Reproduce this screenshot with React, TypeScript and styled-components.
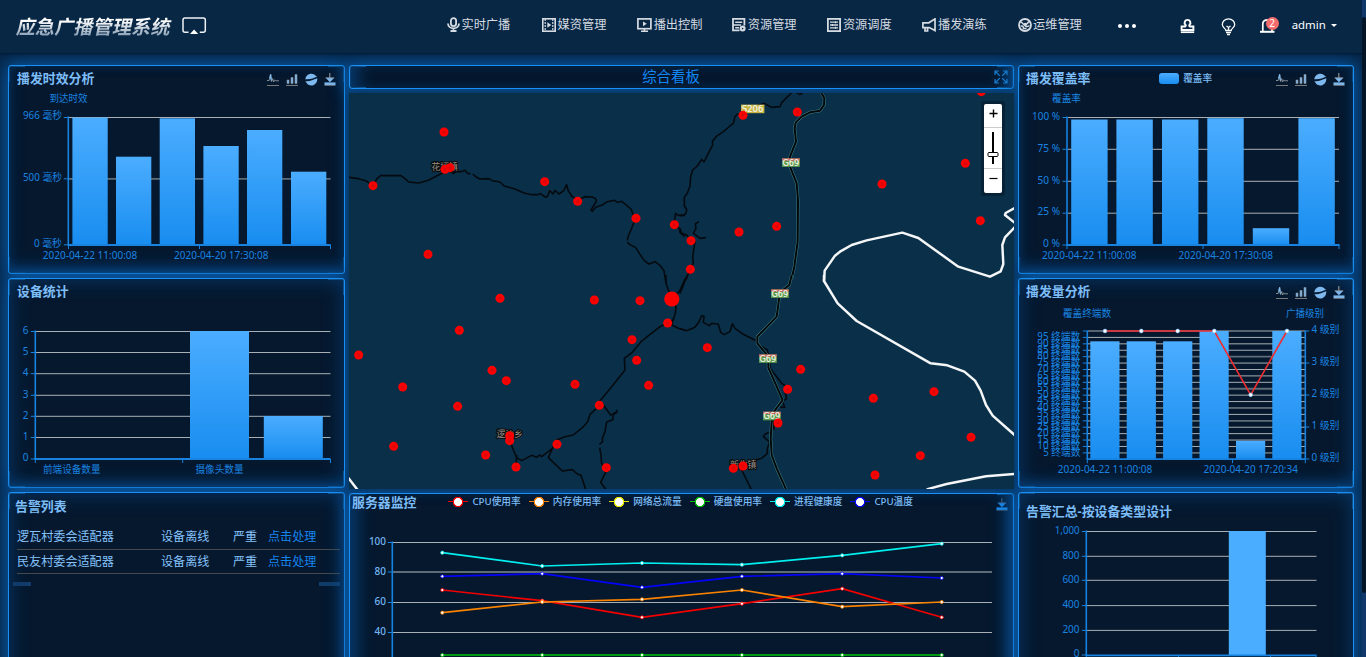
import React from 'react';
import styled, { createGlobalStyle } from 'styled-components';

const FONT = '"Noto Sans", "Noto Sans CJK SC", sans-serif';

const GlobalStyle = createGlobalStyle`
  * { box-sizing: border-box; }
  body {
    margin: 0;
    background: #052444;
    font-family: ${FONT};
    overflow: hidden;
  }
  svg { display: block; }
`;

const Page = styled.div`
  width: 1366px;
  height: 657px;
  overflow: hidden;
  display: flex;
  flex-direction: column;
  position: relative;
`;

/* ---------- header ---------- */

const Header = styled.header`
  flex: none;
  height: 53px;
  display: flex;
  align-items: flex-start;
  background: #082745;
  box-shadow: 0 1px 2px rgba(3, 22, 42, 0.8);
  position: relative;
  z-index: 2;
`;

const Logo = styled.h1`
  margin: 0;
  padding: 12px 0 0 17px;
  width: 182px;
  font-size: 19.3px;
  line-height: 29px;
  font-weight: 700;
  white-space: nowrap;
  span {
    display: inline-block;
    transform: skewX(-12deg);
    background: linear-gradient(180deg, #ffffff 30%, #8ea3b8 80%);
    background-clip: text;
    -webkit-background-clip: text;
    color: transparent;
  }
`;

const CastIcon = styled.svg`
  margin-top: 17px;
`;

const Nav = styled.nav`
  display: flex;
  margin-left: 240px;
  padding-top: 16px;
`;

const NavItem = styled.a`
  width: 95.1px;
  height: 17px;
  display: flex;
  align-items: center;
  gap: 1.5px;
  color: #d5dbe1;
  font-size: 12.2px;
  line-height: 17px;
  white-space: nowrap;
`;

const More = styled.div`
  display: flex;
  gap: 3px;
  margin: 24px 0 0 5px;
  i {
    width: 4px;
    height: 4px;
    border-radius: 50%;
    background: #fff;
  }
`;

const Tools = styled.div`
  display: flex;
  margin-left: 44px;
  padding-top: 17px;
  gap: 26px;
`;

const BellWrap = styled.div`
  position: relative;
  width: 20px;
  margin-left: -2px;
`;

const Badge = styled.span`
  position: absolute;
  left: 6px;
  top: 0;
  width: 13px;
  height: 13px;
  border-radius: 50%;
  background: #f56c6c;
  color: #fff;
  font-size: 10px;
  line-height: 12px;
  text-align: center;
`;

const User = styled.div`
  display: flex;
  align-items: center;
  gap: 5px;
  margin-left: 12px;
  padding-top: 16px;
  color: #fff;
  font-size: 11.4px;
  line-height: 18px;
  &::after {
    content: '';
    border: 3.5px solid transparent;
    border-top-color: #fff;
    border-bottom: 0;
  }
`;

/* ---------- dashboard ---------- */

const Board = styled.main`
  flex: none;
  display: grid;
  grid-template-columns: 337px 665px 336px;
  column-gap: 4px;
  padding: 12px 0 0 8px;
`;

const Column = styled.div`
  display: flex;
  flex-direction: column;
  gap: 4px;
`;

const CORNER = '#1a6da8';
const INNER = '#07396b';
const Panel = styled.section<{ $h: number; $glow?: string }>`
  flex: none;
  height: ${(p) => p.$h}px;
  border: 1px solid #1890f5;
  border-radius: 3px;
  box-shadow: 0 0 18px 2px #0a5cab, ${(p) => p.$glow || `inset 0 0 20px ${INNER}`};
  background:
    linear-gradient(${CORNER}, ${CORNER}) 0 0 / 16px 1px no-repeat,
    linear-gradient(${CORNER}, ${CORNER}) 0 0 / 1px 16px no-repeat,
    linear-gradient(${CORNER}, ${CORNER}) 100% 0 / 16px 1px no-repeat,
    linear-gradient(${CORNER}, ${CORNER}) 100% 0 / 1px 16px no-repeat,
    linear-gradient(${CORNER}, ${CORNER}) 0 100% / 16px 1px no-repeat,
    linear-gradient(${CORNER}, ${CORNER}) 0 100% / 1px 16px no-repeat,
    linear-gradient(${CORNER}, ${CORNER}) 100% 100% / 16px 1px no-repeat,
    linear-gradient(${CORNER}, ${CORNER}) 100% 100% / 1px 16px no-repeat,
    #05182e;
`;

const PanelHead = styled.div<{ $h?: number; $pl?: number }>`
  height: ${(p) => p.$h || 22}px;
  padding: 1px 8px 0 ${(p) => p.$pl ?? 8}px;
  display: flex;
  align-items: center;
  justify-content: space-between;
`;

const ServerHead = styled(PanelHead)`
  padding: 0 5px 0 2px;
  align-items: flex-start;
`;

const Title = styled.h2`
  margin: 0;
  font-size: 12.9px;
  line-height: 18px;
  font-weight: 700;
  color: #7dbdf7;
  white-space: nowrap;
`;

const LowTitle = styled(Title)`
  padding-top: 5px;
`;

const ServerTitle = styled(Title)`
  margin-top: -1px;
`;

const Toolbox = styled.div`
  display: flex;
  gap: 7px;
  padding-top: 4px;
`;

const RateLegend = styled.div`
  display: flex;
  align-items: center;
  gap: 4px;
  margin: 1px 0 0 5px;
  color: #7dbdf7;
  font-size: 9.7px;
  font-weight: 500;
  &::before {
    content: '';
    width: 20px;
    height: 11px;
    border-radius: 3px;
    background: linear-gradient(#4badff, #188df0);
  }
`;

const BoardTitle = styled.div`
  flex: 1;
  text-align: center;
  padding-right: 2px;
  font-size: 14.4px;
  line-height: 22px;
  color: #1287f5;
`;

const TitleBar = styled(Panel)`
  display: flex;
  align-items: center;
  padding-right: 5px;
`;

const AlarmList = styled.ul`
  list-style: none;
  margin: 8px 4px 0 8px;
  padding: 0;
`;

const AlarmRow = styled.li`
  display: grid;
  grid-template-columns: 144px 72px 35px 1fr;
  height: 24.5px;
  border-bottom: 1px solid #45494d;
  font-size: 12.1px;
  line-height: 23px;
  color: #86c3fb;
  white-space: nowrap;
  a { color: #1684ee; }
`;

const ListEnds = styled.div`
  display: flex;
  justify-content: space-between;
  margin: 8px 4px 0 4px;
  &::before, &::after {
    content: '';
    width: 18px;
    height: 4px;
    background: #113c69;
  }
  &::after { width: 21px; }
`;

const MapBox = styled.div`
  position: relative;
  height: 396px;
  background: #0a3049;
  overflow: hidden;
`;

const ZoomCtl = styled.div`
  position: absolute;
  right: 9px;
  top: 8px;
  width: 24px;
  padding: 3px;
  border-radius: 3px;
  background: #072236;
`;

const ZoomInner = styled.div`
  display: grid;
  grid-template-rows: 23px 1px 40px 1px 24px;
  background: #fff;
  border-radius: 2px;
  hr { margin: 0; border: 0; background: #ccc; }
  svg { margin: auto; }
`;

const Scrollbar = styled.div`
  position: absolute;
  z-index: 3;
  right: 0;
  top: 0;
  width: 4px;
  height: 657px;
  background: #11386a;
  &::before {
    content: '';
    display: block;
    margin-top: 17px;
    height: 576px;
    border-radius: 2px;
    background: #041528;
  }
`;

/* ---------- chart parts ---------- */

const AxisText = styled.text<{ $light?: boolean }>`
  font-family: ${FONT};
  font-size: 10px;
  font-weight: ${(p) => (p.$light ? 500 : 400)};
  fill: ${(p) => (p.$light ? '#74b6f2' : '#1a84e0')};
`;

type LabelProps = { x: number; y: number; w?: number; end?: boolean; light?: boolean; children: React.ReactNode };
const Label = ({ x, y, w, end, light, children }: LabelProps) => (
  <AxisText x={x} y={y + 3.4} textLength={w} lengthAdjust="spacingAndGlyphs" textAnchor={end ? 'end' : 'start'} $light={light}>
    {children}
  </AxisText>
);

const AXIS = '#1782e0';

const Grid = ({ x1, x2, ys, dim = [] }: { x1: number; x2: number; ys: number[]; dim?: number[] }) => (
  <g>
    {ys.map((y, i) => (
      <line key={y} x1={x1} x2={x2} y1={y} y2={y} stroke={dim.includes(i) ? '#5e6c78' : '#a9b0b5'} strokeWidth={dim.includes(i) ? 1.8 : 1} />
    ))}
  </g>
);

const YAxis = ({ x, top, bottom, ticks, right }: { x: number; top: number; bottom: number; ticks: number[]; right?: boolean }) => (
  <g stroke={AXIS}>
    <line x1={x} x2={x} y1={top} y2={bottom} strokeWidth="1.6" />
    {ticks.map((t) => (
      <line key={t} x1={right ? x : x - 4.5} x2={right ? x + 4 : x} y1={t} y2={t} strokeWidth="1" />
    ))}
  </g>
);

const XAxis = ({ x1, x2, y, ticks }: { x1: number; x2: number; y: number; ticks: number[] }) => (
  <g stroke={AXIS}>
    <line x1={x1 - 0.5} x2={x2 + 0.5} y1={y} y2={y} strokeWidth="1.8" />
    {ticks.map((t) => (
      <line key={t} x1={t} x2={t} y1={y} y2={y + 4} strokeWidth="1" />
    ))}
  </g>
);

const Bars = ({ id, items, w, base }: { id: string; items: number[][]; w: number; base: number }) => (
  <g>
    <defs>
      <linearGradient id={id} x1="0" y1="0" x2="0" y2="1">
        <stop offset="0" stopColor="#4badff" />
        <stop offset="1" stopColor="#188df0" />
      </linearGradient>
    </defs>
    {items.map(([x, y]) => (
      <rect key={x} x={x} y={y} width={w} height={base - y} fill={`url(#${id})`} />
    ))}
  </g>
);

/* ---------- icons ---------- */

const ICON = '#7db9ee';
const DownloadIcon = ({ bright = ICON, stem = '#8a8f94' }: { bright?: string; stem?: string }) => (
  <svg width="12" height="14" viewBox="0 0 12 14">
    <path d="M5.8 0V6" stroke={stem} strokeWidth="1.2" />
    <path d="M1.6 4.8H10.4L5.9 9.3Z" fill={bright} />
    <path d="M1.6 4.8H10.2" stroke={stem} strokeWidth=".8" />
    <rect x=".5" y="9.4" width="11" height="2.6" fill={bright} />
    <path d="M.5 12.4H11.5" stroke={stem} strokeWidth=".8" />
  </svg>
);

const ToolEnd = styled.div`
  margin-left: -1px;
`;

const ChartTools = () => (
  <Toolbox>
    <svg width="12" height="14" viewBox="0 0 12 14">
      <path d="M0 7.5H2.2L3.6 1 4.6 8.5 5.6 5.5 6.6 9 7.6 6.8 8.6 7.8H12" fill="none" stroke="#8f979e" strokeWidth=".9" />
      <path d="M2.9 5.5L3.6 1.6 4.3 7.5" fill="none" stroke={ICON} strokeWidth="1.2" />
      <path d="M0 12.5H12" stroke="#77797b" strokeWidth="1" />
    </svg>
    <svg width="12" height="14" viewBox="0 0 12 14">
      <path d="M1 7H3V10.6H1ZM5 4.5H7V10.6H5ZM9 1.5H11V10.6H9Z" fill={ICON} stroke="#8a8f94" strokeWidth=".6" />
      <path d="M0 12.5H12" stroke="#77797b" strokeWidth="1" />
    </svg>
    <svg width="13" height="14" viewBox="0 0 13 14">
      <path d="M.3 6.2C.8 3 3.3.8 6.3.8 8.6.8 10.2 1.7 11.2 3.2L12.4 3.5C8.5 5 6 6.6.3 6.2ZM.3 8.3C5.5 8.6 8 6.4 12.3 5.3 12.5 9.5 9.8 12.6 6.3 12.6 4.2 12.6 2.4 11.5 1.5 9.8Z" fill={ICON} />
    </svg>
    <ToolEnd><DownloadIcon /></ToolEnd>
  </Toolbox>
);

const G = '#d5dbe1';
const navIcons: React.ReactNode[] = [
  <svg key="mic" width="13" height="15" viewBox="0 0 13 15" fill="none" stroke={G}>
    <rect x="3.9" y="1.2" width="5.2" height="8" rx="2.6" strokeWidth="1.8" />
    <path d="M1 6.5C1 13 12 13 12 6.5M6.5 11.5V14M3.5 14H9.5" strokeWidth="1.8" />
  </svg>,
  <svg key="media" width="14" height="14" viewBox="0 0 14 14" fill="none" stroke={G}>
    <rect x=".8" y=".8" width="12.4" height="12.4" strokeWidth="1.6" />
    <path d="M3.2 1V13M10.8 1V13" strokeWidth="1.2" strokeDasharray="2 1" />
    <path d="M5.3 4.3V9.7L9.3 7Z" fill={G} stroke="none" />
  </svg>,
  <svg key="play" width="15" height="14" viewBox="0 0 15 14" fill="none" stroke={G}>
    <rect x=".9" y=".9" width="13" height="9.8" strokeWidth="1.7" />
    <path d="M6 3.4V8.2L9.8 5.8Z" fill={G} stroke="none" />
    <path d="M7.4 10.5V13M4 13.2H11" strokeWidth="1.5" />
  </svg>,
  <svg key="res" width="14" height="14" viewBox="0 0 14 14" fill="none" stroke={G}>
    <path d="M7.5 12.4H1V.9H12.4V7.5" strokeWidth="1.8" />
    <path d="M3.2 4.2H10.2M1 7H9M3.2 9.7H7" strokeWidth="1.4" />
    <circle cx="10.6" cy="10.6" r="3" fill={G} stroke="none" />
    <circle cx="10.6" cy="10.6" r=".8" fill="#082745" stroke="none" />
  </svg>,
  <svg key="sched" width="14" height="14" viewBox="0 0 14 14" fill="none" stroke={G}>
    <rect x=".9" y=".9" width="12.2" height="12.2" strokeWidth="1.8" />
    <path d="M3 4.2H11M3 7H11M3 9.8H11" strokeWidth="1.3" />
    <path d="M8.5 3.2V5.2M5.5 6V8M8.5 8.8V10.8" strokeWidth="1.2" />
  </svg>,
  <svg key="horn" width="14" height="14" viewBox="0 0 14 14" fill="none" stroke={G} strokeWidth="1.7">
    <path d="M13 .9V12.6L7.3 9.6H.9V4.8H6.8Z" />
    <path d="M3 9.8V13H5.6V10" />
  </svg>,
  <svg key="ops" width="14" height="14" viewBox="0 0 14 14" fill="none" stroke={G}>
    <circle cx="7" cy="7" r="6" strokeWidth="1.8" />
    <path d="M3 3.8L6 6.8M11 3.6L8 6.6C6.500 8.5 9 9.5 11.500 7.5M2.500 8.2C5 7.5 5.500 9 5.500 10.500H8.500" strokeWidth="1.5" />
    <circle cx="7" cy="6.6" r="1.3" fill={G} />
  </svg>,
];
const navNames = ['实时广播', '媒资管理', '播出控制', '资源管理', '资源调度', '播发演练', '运维管理'];

/* ---------- map ---------- */

type Tile = { at: [number, number]; roads: string; highway?: string; border?: string; dots: [number, number][] };

const tiles: Tile[] = [
  {
    at: [345, 60],
    roads:
      'M12 352L40 356 62 362 84 377 96 356 107 347 168 347 180 356 191 366 222 369 250 361 275 348 300 335 315 330 325 341 333 334 350 335 360 331 368 340 376 341M383 342L395 352 405 357 432 356 442 362 465 366 478 378 510 387 535 398 560 404 578 404 586 401 602 412 608 408 614 392 624 402 630 391 642 402 656 392 665 374 670 393 682 410 698 420 720 410 742 411 752 416 754 424 738 450 742 454 752 442 770 436 785 426 808 421 818 427 830 424 845 436 858 447 864 462 870 478 860 505 850 528 847 541M847 546L853 553 872 563 885 583 898 602 912 612 930 605 945 616 957 632 963 670M988 494L1003 505 1005 518 1020 530M988 484L992 460 1000 466 1020 466',
    dots: [[297, 216], [300, 328], [315, 323], [84, 377], [599, 365], [698, 424], [873, 475], [988, 494], [249, 583]],
  },
  {
    at: [680, 60],
    roads:
      'M334 98L328 105 305 128 300 140 275 142 253 130 230 138 205 152 189 165 172 162 165 170 160 190 150 198 130 215 108 230 97 245 98 255 85 280 72 306 65 298 52 318 38 330 32 350 30 378 22 400 13 412 13 438 20 448 18 460 8 466 0 466M350 98L360 104 368 99M0 505L5 520 20 525 33 542 45 545 38 590 40 610 30 628 18 660M57 484L46 492 48 505 40 520 60 535 78 533',
    highway:
      'M424 98L433 115 432 135 420 152 390 157 365 170 347 188 344 205 348 245 330 290 330 320 350 370 354 420 353 545 343 620 334 660',
    border:
      'M432 665L434 632 465 587 480 575 515 555 560 541 667 518 715 534 835 620 930 650 962 634 970 612 967 555 975 532 1006 500M1006 490L975 465 977 459 1006 443',
    dots: [[189, 166], [352, 156], [904, 95], [856, 310], [606, 372], [901, 482], [290, 499], [177, 516], [33, 542], [31, 628]],
  },
  {
    at: [345, 275],
    roads:
      'M963 0L963 25 970 45 978 65 993 95 991 115 985 135 968 144 945 155 888 200 862 232 838 250 840 285 800 335 763 380 763 392 735 418 728 440 712 458 685 480 660 485 635 495 622 520 590 545 583 540 575 547 560 541 530 557 515 548 505 525 498 505M622 520L610 548 652 588 682 584 697 597 708 601 722 643M775 390L797 420 812 415 816 404M818 412L806 415 803 434 785 441 780 470 772 490 773 500 763 508M764 518L768 540 770 565 782 592 767 622 782 643M515 540L513 578M979 70L1003 50 1021 10M985 130L980 150 1000 160 1021 166',
    border: 'M8 606L38 645',
    dots: [[465, 70], [748, 75], [885, 77], [968, 144], [861, 194], [875, 256], [343, 166], [41, 240], [441, 286], [484, 317], [690, 328], [911, 331], [173, 336], [338, 394], [763, 391], [494, 482], [494, 497], [636, 508], [146, 514], [422, 540], [513, 576], [784, 578]],
  },
  {
    at: [680, 275],
    roads:
      'M0 161L20 167 45 157 57 140 65 122 72 124 70 142 88 152 95 145 115 148 122 172 133 179 150 170 157 146 165 160 190 178 205 185 230 198M240 212L262 225 268 250 270 280 290 305 305 325 320 335 315 350 320 370 308 380 314 397 300 396M280 430L282 465M268 472L255 478 250 485 268 500M270 500L262 520 262 535 245 550 225 556 190 570M185 585L214 643M0 56L22 0',
    highway: 'M335 0L328 30 300 52 290 125 232 185 232 205 265 245 265 278 308 375 282 410 275 440 272 490 275 540 290 580 318 643',
    border: 'M432 0L432 18 473 85 530 138 752 265 802 271 853 290 885 317 902 347 918 390 938 422 1006 482M740 643L800 627 918 604 1006 597',
    dots: [[82, 218], [362, 283], [323, 343], [580, 370], [762, 350], [873, 487], [721, 542], [585, 600], [294, 444], [160, 580], [189, 573]],
  },
];

const TownName = styled.text`
  font-family: ${FONT};
  font-size: 8.8px;
  fill: #97918b;
  stroke: #0b0b0b;
  stroke-width: 2px;
  paint-order: stroke;
`;

const RoadNo = styled.text`
  font-family: "DejaVu Sans", sans-serif;
  font-size: 9px;
  fill: #f3f6ea;
  stroke: #f3f6ea;
  stroke-width: 0.2px;
`;

const inTile = (t: Tile) => `translate(${t.at[0]} ${t.at[1]}) scale(0.33333)`;

const RegionMap = () => (
  <svg width="665" height="396" viewBox="349 93 665 396">
    {tiles.map((t, i) => (
      <g key={i} transform={inTile(t)} fill="none" strokeLinejoin="round">
        <path d={t.roads} stroke="#040a0f" strokeWidth="4.8" />
        {t.highway && <path d={t.highway} stroke="#3d7f84" strokeWidth="9" />}
        {t.highway && <path d={t.highway} stroke="#03080b" strokeWidth="6" />}
        {t.border && <path d={t.border} stroke="#f4f6f7" strokeWidth="7.4" />}
      </g>
    ))}
    <rect x="741" y="104.6" width="23.4" height="8.6" fill="#c6b445" />
    <RoadNo x="741.8" y="112.2" textLength="21.6" lengthAdjust="spacingAndGlyphs">S206</RoadNo>
    {[[782, 158.3], [771, 289.3], [759, 354.3], [763, 411.7]].map(([x, y]) => (
      <g key={y}>
        <rect x={x} y={y} width="17.8" height="8.6" fill="#5d9c4e" />
        <rect x={x} y={y} width="17.8" height="2.4" fill="#c4625f" />
        <RoadNo x={x + 0.5} y={y + 7.7} textLength="16.8" lengthAdjust="spacingAndGlyphs">G69</RoadNo>
      </g>
    ))}
    <TownName x="431.5" y="169.8">花坪镇</TownName>
    <TownName x="496.5" y="436.6">逻沙乡</TownName>
    <TownName x="730" y="468">新化镇</TownName>
    {tiles.map((t, i) => (
      <g key={i} transform={inTile(t)}>
        {t.dots.map(([x, y]) => (
          <g key={`${x}-${y}`}>
            <circle cx={x} cy={y} r="13.5" fill="#fb0000" />
            <circle cx={x} cy={y} r="4.5" fill="#d40a0a" />
          </g>
        ))}
      </g>
    ))}
    <circle cx="671.8" cy="299" r="7.6" fill="#ff0000" />
  </svg>
);

const ZoomControl = () => (
  <ZoomCtl>
    <ZoomInner>
      <svg width="9" height="23" viewBox="0 0 9 23">
        <path d="M.5 9.5H8.5M4.5 5.5V13.5" stroke="#000" strokeWidth="1.4" />
      </svg>
      <hr />
      <svg width="12" height="40" viewBox="0 0 12 40">
        <path d="M6 4V36" stroke="#000" strokeWidth="2" />
        <rect x="1" y="24.5" width="10" height="4" rx="1" fill="#fff" stroke="#000" />
      </svg>
      <hr />
      <svg width="9" height="24" viewBox="0 0 9 24">
        <path d="M.5 9.5H8.5" stroke="#000" strokeWidth="1.2" />
      </svg>
    </ZoomInner>
  </ZoomCtl>
);

/* ---------- server monitor ---------- */

const Legend = styled.div`
  flex: none;
  display: flex;
  margin: 1px auto 0 32px;
`;

const LegendItem = styled.div<{ $c: string }>`
  width: 80.4px;
  display: flex;
  align-items: center;
  gap: 4px;
  font-size: 9.7px;
  font-weight: 500;
  line-height: 14px;
  color: #7dbdf7;
  white-space: nowrap;
  &::before {
    content: '';
    flex: none;
    width: 20px;
    height: 12px;
    background:
      radial-gradient(circle at 50% 50%, #fff 0 3.7px, ${(p) => p.$c} 4.3px 5px, transparent 5.5px),
      linear-gradient(${(p) => p.$c}, ${(p) => p.$c}) 0 50% / 100% 1.4px no-repeat;
  }
`;

const ServerTool = styled.div`
  margin-top: 4px;
`;

const xs = [442.3, 542.2, 642, 741.9, 842.2, 941.7];
const series = [
  { name: 'CPU使用率', color: '#f40000', ys: [590, 600.7, 617.3, 603.7, 588.7, 617.3] },
  { name: '内存使用率', color: '#f98200', ys: [612.7, 602, 599.3, 590, 606.7, 602] },
  { name: '网络总流量', color: '#eaea00', ys: [] },
  { name: '硬盘使用率', color: '#00c40c', ys: [655, 655, 655, 655, 655, 655] },
  { name: '进程健康度', color: '#00efef', ys: [552.7, 566, 563, 564.7, 555.3, 543.7] },
  { name: 'CPU温度', color: '#0404f8', ys: [576.3, 573.7, 587.3, 576.3, 573.7, 578] },
];

const ServerChart = () => (
  <svg width="663" height="170" viewBox="350 512 663 170">
    <Grid x1={393} x2={992} ys={[542.5, 572, 602.5, 632.5]} dim={[1]} />
    <YAxis x={392.3} top={541.5} bottom={682} ticks={[542.5, 572, 602.5, 632.5]} />
    {['100', '80', '60', '40'].map((t, i) => (
      <Label key={t} x={386} y={541.3 + i * 30} w={t.length * 5.7} end light>{t}</Label>
    ))}
    {series.map((s) => (
      <g key={s.name}>
        <polyline points={s.ys.map((y, i) => `${xs[i]},${y}`).join(' ')} fill="none" stroke={s.color} strokeWidth="1.7" />
        {s.ys.map((y, i) => (
          <circle key={i} cx={xs[i]} cy={y} r="1.6" fill="#fff" stroke={s.color} strokeWidth=".8" />
        ))}
      </g>
    ))}
  </svg>
);

/* ---------- side charts ---------- */

const DelayChart = () => (
  <svg width="335" height="185" viewBox="9 88 335 185">
    <Label x={49.5} y={99} w={38}>到达时效</Label>
    <Grid x1={69} x2={330.5} ys={[117.5, 178.8]} dim={[1]} />
    <Bars id="delay" w={35.3} base={245} items={[[72.4, 117.5], [116, 156.7], [159.7, 118.3], [203.4, 146], [247, 130], [291, 171.7]]} />
    <YAxis x={68.3} top={116.5} bottom={245} ticks={[117.5, 178.8, 244.8]} />
    <XAxis x1={68} x2={330} y={245} ticks={[68.5, 199.5, 330.5]} />
    <Label x={62} y={116} w={39} end>966 毫秒</Label>
    <Label x={62} y={178} w={39} end>500 毫秒</Label>
    <Label x={62} y={244} w={28} end>0 毫秒</Label>
    <Label x={42.8} y={255.3} w={94.5}>2020-04-22 11:00:08</Label>
    <Label x={174} y={255.3} w={94.5}>2020-04-20 17:30:08</Label>
  </svg>
);

const deviceYs = [331.5, 352.5, 373.7, 395.3, 416.3, 437.5, 459];
const DeviceChart = () => (
  <svg width="335" height="186" viewBox="9 301 335 186">
    <Grid x1={36} x2={330.5} ys={deviceYs.slice(0, 6)} />
    <Bars id="device" w={59} base={459} items={[[190, 331], [263.8, 416]]} />
    <YAxis x={35.3} top={330.5} bottom={459} ticks={deviceYs} />
    <XAxis x1={35} x2={330} y={459} ticks={[35.3, 182.7, 330.5]} />
    {deviceYs.map((y, i) => (
      <Label key={y} x={28.5} y={y - 1} end>{6 - i}</Label>
    ))}
    <Label x={43} y={469.3} w={57.5}>前端设备数量</Label>
    <Label x={195.5} y={469.3} w={48}>摄像头数量</Label>
  </svg>
);

const coverYs = [117.5, 149.3, 181.3, 213.2, 245];
const CoverChart = () => (
  <svg width="334" height="185" viewBox="1019 88 334 185">
    <Label x={1052} y={99} w={29}>覆盖率</Label>
    <Grid x1={1068} x2={1339} ys={coverYs.slice(0, 4)} />
    <Bars id="cover" w={36.4} base={245} items={[[1071.2, 119.5], [1116.4, 119.5], [1162, 119.5], [1207.3, 118.2], [1252.8, 228.2], [1298.4, 118.2]]} />
    <YAxis x={1067} top={116.5} bottom={245} ticks={coverYs} />
    <XAxis x1={1067} x2={1339} y={245} ticks={[1067, 1203, 1339]} />
    {[100, 75, 50, 25, 0].map((v, i) => (
      <Label key={v} x={1060} y={coverYs[i] - 1.2} w={v === 100 ? 28 : v ? 22.5 : 17} end>{`${v} %`}</Label>
    ))}
    <Label x={1042} y={255.3} w={94.5}>2020-04-22 11:00:08</Label>
    <Label x={1178.5} y={255.3} w={94.5}>2020-04-20 17:30:08</Label>
  </svg>
);

const volumeY = (i: number) => 459.3 - i * 6.415;
const steps = Array.from({ length: 20 }, (_, i) => i + 1);
const volumeLine = [[1105, 331], [1141.3, 331], [1177.7, 331], [1214.3, 331], [1250.7, 394.8], [1287, 331]];
const VolumeChart = () => (
  <svg width="334" height="186" viewBox="1019 301 334 186">
    <Label x={1063} y={313.4} w={48}>覆盖终端数</Label>
    <Label x={1286} y={313.4} w={38}>广播级别</Label>
    <Grid x1={1088} x2={1305} ys={steps.map(volumeY)} dim={[0, 5, 10, 15]} />
    <Bars id="volume" w={29.2} base={459} items={[[1090.3, 341.3], [1126.7, 341.3], [1163.1, 341.3], [1199.5, 331], [1236, 440.8], [1272.3, 331]]} />
    <YAxis x={1087.3} top={330.5} bottom={459} ticks={steps.map(volumeY)} />
    <YAxis x={1305.3} top={330.5} bottom={459} ticks={[331, 363, 395, 427, 459]} right />
    <XAxis x1={1087} x2={1305} y={459.2} ticks={[1087.3, 1232.5, 1305.3]} />
    {steps.slice(0, 19).map((i) => (
      <Label key={i} x={1080.3} y={volumeY(i) - 0.7} w={i === 1 ? 37 : 43} end>{`${i * 5} 终端数`}</Label>
    ))}
    {[4, 3, 2, 1, 0].map((v, i) => (
      <Label key={v} x={1311.5} y={330 + i * 32} w={28}>{`${v} 级别`}</Label>
    ))}
    <polyline points={volumeLine.map((p) => p.join(',')).join(' ')} fill="none" stroke="#ee2d30" strokeWidth="1.6" />
    {volumeLine.map(([x, y]) => (
      <circle key={x} cx={x} cy={y} r="1.9" fill="#fff" stroke="#7fc4ff" strokeWidth=".6" />
    ))}
    <Label x={1057.8} y={469.3} w={94.5}>2020-04-22 11:00:08</Label>
    <Label x={1203.5} y={469.3} w={94.5}>2020-04-20 17:20:34</Label>
  </svg>
);

const alarmYs = [531.5, 556.3, 580.3, 605.6, 630.4, 655];
const AlarmChart = () => (
  <svg width="334" height="160" viewBox="1019 522 334 160">
    <Grid x1={1087} x2={1316.5} ys={alarmYs.slice(0, 5)} />
    <rect x="1228.8" y="531" width="37" height="124" fill="#4badff" />
    <YAxis x={1086.3} top={530.5} bottom={655} ticks={alarmYs} />
    <XAxis x1={1086} x2={1316} y={655.3} ticks={[1086.3, 1178.5, 1270.5, 1316]} />
    {['1,000', '800', '600', '400', '200', '0'].map((t, i) => (
      <Label key={t} x={1079.5} y={alarmYs[i] - 1} w={t.length > 3 ? 24.7 : t.length * 5.7} end>{t}</Label>
    ))}
  </svg>
);

/* ---------- page ---------- */

const alarms = ['逻瓦村委会适配器', '民友村委会适配器'];
const BOTTOM_GLOW = `inset 0 -8px 18px -4px ${INNER}, inset 0 0 10px #062a50`;
const SIDE_GLOW = `inset 16px 0 16px -8px ${INNER}, inset -16px 0 16px -8px ${INNER}`;

export default function App() {
  return (
    <Page>
      <GlobalStyle />
      <Header>
        <Logo><span>应急广播管理系统</span></Logo>
        <CastIcon width="25" height="18" viewBox="0 0 25 18">
          <path d="M6.5 15.2H3C1.8 15.2 1 14.4 1 13.2V3C1 1.8 1.8 1 3 1H21.3C22.5 1 23.3 1.8 23.3 3V13.2C23.3 14.4 22.5 15.2 21.3 15.2H17.8" fill="none" stroke="#eef2f5" strokeWidth="1.5" />
          <path d="M12.1 12.6L16.2 17H8Z" fill="#fff" />
        </CastIcon>
        <Nav>
          {navNames.map((n, i) => (
            <NavItem key={n}>{navIcons[i]}{n}</NavItem>
          ))}
        </Nav>
        <More><i /><i /><i /></More>
        <Tools>
          <svg width="15" height="17" viewBox="0 0 15 17" fill="none" stroke="#fff">
            <path d="M7.5 2.9a2.9 2.9 0 0 1 2 5c-.5.6-.3 1.4.4 1.6H13.4V13H1.6V9.5H5.1c.7-.2.9-1 .4-1.6a2.9 2.9 0 0 1 2-5Z" strokeWidth="1.9" />
            <path d="M.8 15.2H14.2" strokeWidth="1.7" />
          </svg>
          <svg width="15" height="19" viewBox="0 0 15 19" fill="none" stroke="#fff" strokeWidth="1.3">
            <path d="M4.8 13.5C4.8 11.5 1.3 10.5 1.3 7.6a6.2 5.8 0 0 1 12.4 0C13.7 10.5 10.2 11.5 10.2 13.5Z" />
            <path d="M5.5 9L7.5 10.5 9.5 9M7.5 10.5V13M5 15.5H10M6 17.5H9" />
          </svg>
          <BellWrap>
            <svg width="15" height="18" viewBox="0 0 15 18" fill="none" stroke="#fff">
              <path d="M2.8 14V7C2.8 4 5 2.9 8 2.9S12 5 12 7V14" strokeWidth="1.7" />
              <path d="M0 14.8H14.5" strokeWidth="2" />
            </svg>
            <Badge>2</Badge>
          </BellWrap>
        </Tools>
        <User>admin</User>
      </Header>

      <Board>
        <Column>
          <Panel $h={209} $glow={BOTTOM_GLOW}>
            <PanelHead><Title>播发时效分析</Title><ChartTools /></PanelHead>
            <DelayChart />
          </Panel>
          <Panel $h={210}>
            <PanelHead><Title>设备统计</Title></PanelHead>
            <DeviceChart />
          </Panel>
          <Panel $h={220}>
            <PanelHead $h={24} $pl={6}><Title>告警列表</Title></PanelHead>
            <AlarmList>
              {alarms.map((a) => (
                <AlarmRow key={a}>
                  <span>{a}</span><span>设备离线</span><span>严重</span><a>点击处理</a>
                </AlarmRow>
              ))}
            </AlarmList>
            <ListEnds />
          </Panel>
        </Column>

        <Column>
          <TitleBar $h={24} $glow={SIDE_GLOW}>
            <BoardTitle>综合看板</BoardTitle>
            <svg width="14" height="14" viewBox="0 0 14 14" fill="none" stroke="#1a7fd0" strokeWidth="1.2">
              <path d="M1 5V1H5M9 1H13V5M13 9V13H9M5 13H1V9M1.5 1.5L5.8 5.8M12.5 1.5L8.2 5.8M12.5 12.5L8.2 8.2M1.5 12.5L5.8 8.2" />
            </svg>
          </TitleBar>
          <MapBox>
            <RegionMap />
            <ZoomControl />
          </MapBox>
          <Panel $h={220} $glow={SIDE_GLOW}>
            <ServerHead $h={18}>
              <ServerTitle>服务器监控</ServerTitle>
              <Legend>
                {series.map((s) => (
                  <LegendItem key={s.name} $c={s.color}>{s.name}</LegendItem>
                ))}
              </Legend>
              <ServerTool><DownloadIcon bright="#1a86e6" stem="#3f5a72" /></ServerTool>
            </ServerHead>
            <ServerChart />
          </Panel>
        </Column>

        <Column>
          <Panel $h={209} $glow={BOTTOM_GLOW}>
            <PanelHead $pl={7}>
              <Title>播发覆盖率</Title>
              <RateLegend>覆盖率</RateLegend>
              <ChartTools />
            </PanelHead>
            <CoverChart />
          </Panel>
          <Panel $h={210}>
            <PanelHead $pl={7}><Title>播发量分析</Title><ChartTools /></PanelHead>
            <VolumeChart />
          </Panel>
          <Panel $h={220}>
            <PanelHead $h={29} $pl={7}><LowTitle>告警汇总-按设备类型设计</LowTitle></PanelHead>
            <AlarmChart />
          </Panel>
        </Column>
      </Board>
      <Scrollbar />
    </Page>
  );
}
